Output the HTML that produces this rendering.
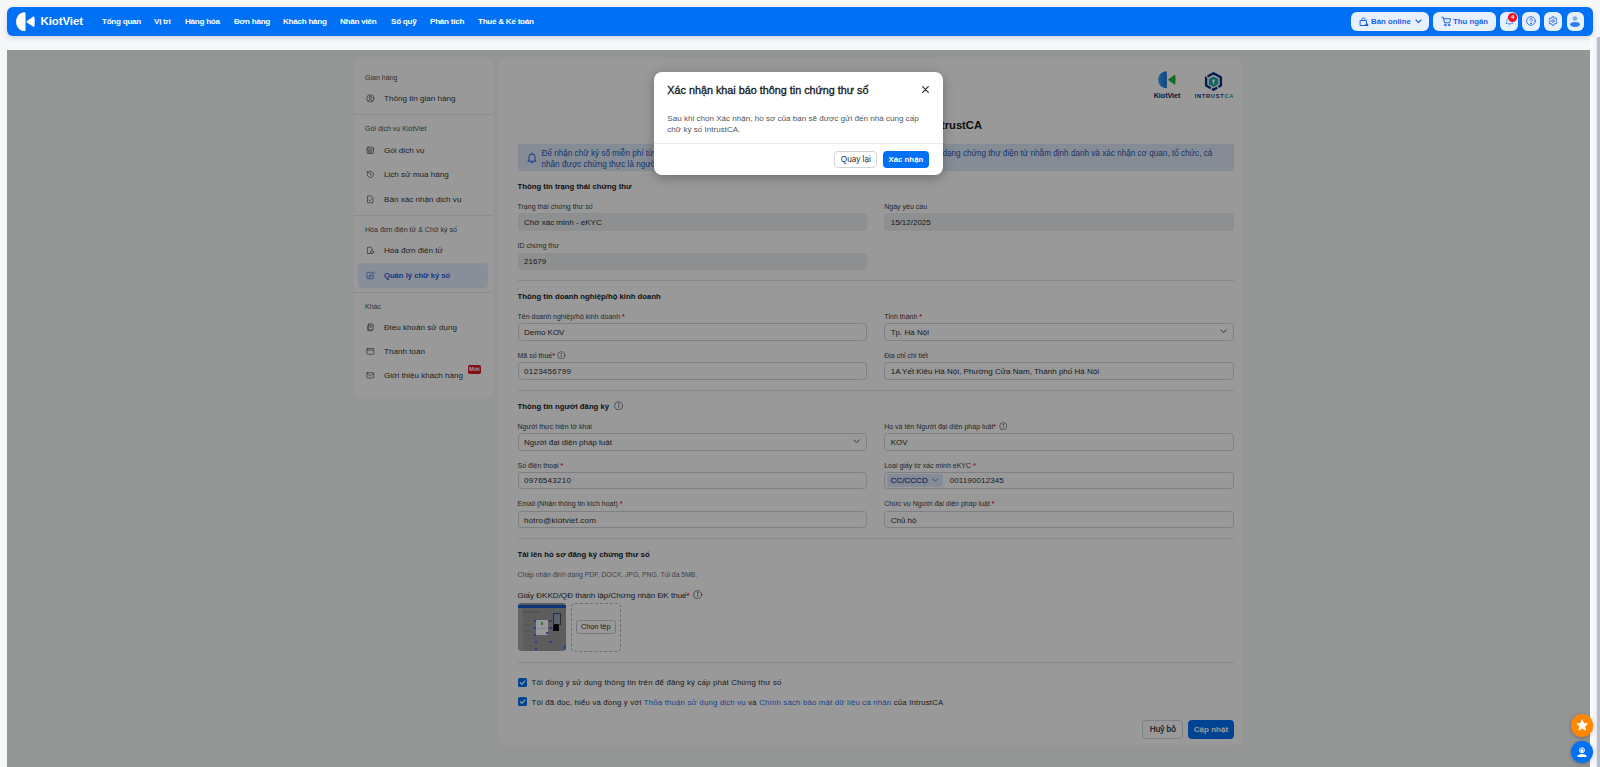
<!DOCTYPE html>
<html lang="vi">
<head>
<meta charset="utf-8">
<title>KiotViet - Quản lý chữ ký số</title>
<style>
*{box-sizing:border-box;margin:0;padding:0}
html,body{width:1600px;height:767px;overflow:hidden}
body{background:#f6f7f9;font-family:"Liberation Sans",Arial,sans-serif;color:#1f2329;position:relative;-webkit-font-smoothing:antialiased}
.abs{position:absolute}
/* ---------- header ---------- */
#hdr{position:absolute;left:7px;top:7px;width:1586px;height:29px;background:#0070f4;border-radius:6px;box-shadow:0 2px 5px rgba(60,80,120,.22)}
#hdr .brand{position:absolute;left:33.5px;top:5.2px;font-size:11.5px;font-weight:700;color:#fff;line-height:19px;letter-spacing:-.1px}
#hdr .nav{position:absolute;top:0;height:29px;line-height:29px;font-size:8.1px;letter-spacing:-.26px;font-weight:700;color:#fff;white-space:nowrap}
.hbtn{position:absolute;top:5.2px;height:18.6px;border-radius:6px;background:#e6f0ff;color:#1c62e8;font-size:7.8px;font-weight:700;line-height:19.8px;white-space:nowrap}
/* ---------- frame ---------- */
#frame{position:absolute;left:7px;top:50px;width:1583px;height:717px;background:#f7faf8;overflow:hidden}
#ovl{position:absolute;left:0;top:0;width:1583px;height:717px;background:rgba(0,0,0,.4)}
.card{position:absolute;background:#fff;border-radius:5px}
/* sidebar */
#side{left:347px;top:9px;width:138.5px;height:337.5px}
#side .grp{position:absolute;left:11px;margin-top:.8px;font-size:7.05px;color:#4b5058;line-height:10px;white-space:nowrap}
#side .it{position:absolute;left:30px;margin-top:1px;font-size:8.1px;color:#33373d;line-height:12px;white-space:nowrap}
#side .ic{position:absolute;left:12.3px;margin-top:.6px;width:8.7px;height:8.7px}
#side .hr{position:absolute;left:0;width:138px;height:1px;background:#e6e8eb}
#side .act{position:absolute;left:3.5px;top:203.5px;width:130px;height:25px;border-radius:4px;background:#e4eefd}
/* main */
#main{left:492px;top:9px;width:743px;height:686px}
.sec{position:absolute;left:18.5px;font-size:7.75px;font-weight:700;color:#16191d;line-height:12px;white-space:nowrap}
.lbl{position:absolute;margin-top:.7px;font-size:7.03px;color:#3d4148;line-height:10px;white-space:nowrap}
.lbl b{color:#e5252a;font-weight:700}
.inp{position:absolute;width:349.5px;height:17px;border:1px solid #d2d5da;border-radius:3.5px;background:#fff;font-size:8px;color:#2a2e34;line-height:15px;padding-left:5.5px;white-space:nowrap}
.inp.dis{background:#eceef1;border-color:#eceef1}
.c1{left:18px}.c2{left:385px}
.hr2{position:absolute;left:18.5px;width:716.5px;height:1px;background:#e3e5e8}
.chev{position:absolute;right:6px;top:5px;width:7px;height:5px}
.info{display:inline-block;width:8.6px;height:8.6px;vertical-align:-1.8px;margin-left:2.5px}
.tag{position:relative;display:inline-block;width:56.75px;height:13.2px;line-height:14px;padding-left:3.75px;border-radius:2.5px;background:#dfe9fb;color:#3560b5;font-weight:400;-webkit-text-stroke:.28px #3560b5;font-size:8.1px;vertical-align:0;margin-left:-4px;text-align:left}
.ck{margin-top:.9px;font-size:7.8px;letter-spacing:.19px;color:#2a2e34;line-height:12px;white-space:nowrap}
.lk{color:#2a70ee}
.btn{border-radius:3px;font-size:7.600px;font-weight:700;text-align:center;white-space:nowrap}
.alt{font-size:8.17px;color:#2858b8;line-height:10.75px;white-space:nowrap}
/* modal */
#modal{position:absolute;left:654px;top:72px;width:289px;height:103.2px;background:#fff;border-radius:8px;box-shadow:0 3px 12px rgba(0,0,0,.28)}
</style>
</head>
<body>
<div id="hdr">
  <svg class="abs" style="left:9px;top:5px" width="19" height="20" viewBox="0 0 19 20"><path d="M8.600 0.300 C3.600 0.300 0.100 4.600 0.100 9.700 C0.100 14.800 3.600 19.100 8.600 19.100 C9.300 19.100 9.500 18.700 9.500 18 L9.500 1.400 C9.500 0.700 9.300 0.300 8.600 0.300 Z" fill="#fff"/><path d="M17.300 4.600 C17.800 4.300 18.300 4.500 18.400 5.100 C18.900 8.100 18.900 11.300 18.400 14.300 C18.300 14.900 17.800 15.100 17.300 14.800 L10.900 10.400 C10.400 10 10.400 9.400 10.900 9 Z" fill="#fff"/></svg>
  <div class="brand">KiotViet</div>
  <div class="nav" style="left:95px">Tổng quan</div>
  <div class="nav" style="left:147px">Vị trí</div>
  <div class="nav" style="left:178px">Hàng hóa</div>
  <div class="nav" style="left:227px">Đơn hàng</div>
  <div class="nav" style="left:276px">Khách hàng</div>
  <div class="nav" style="left:333px">Nhân viên</div>
  <div class="nav" style="left:384px">Sổ quỹ</div>
  <div class="nav" style="left:423px">Phân tích</div>
  <div class="nav" style="left:471px">Thuế &amp; Kế toán</div>
  <div class="hbtn" style="left:1344px;width:77.5px;padding-left:20px">Bán online
    <svg class="abs" style="left:8px;top:4.5px" width="10" height="10" viewBox="0 0 20 20" fill="none" stroke="#1c62e8" stroke-width="2" stroke-linecap="round" stroke-linejoin="round"><path d="M3 7h12v10H3z"/><path d="M6 7V5a3 3 0 0 1 6 0v2"/><circle cx="15.5" cy="15.5" r="3.2" fill="#1c62e8" stroke="none"/></svg>
    <svg class="abs" style="left:64px;top:6.5px" width="7" height="5" viewBox="0 0 7 5" fill="none" stroke="#1c62e8" stroke-width="1.2" stroke-linecap="round" stroke-linejoin="round"><path d="M1 1l2.5 2.6L6 1"/></svg>
  </div>
  <div class="hbtn" style="left:1426px;width:63px;padding-left:20px">Thu ngân
    <svg class="abs" style="left:7.5px;top:4px" width="11" height="11" viewBox="0 0 22 22" fill="none" stroke="#1c62e8" stroke-width="2" stroke-linecap="round" stroke-linejoin="round"><path d="M1.5 2.5h3l2.6 11h10l2.2-8H6"/><circle cx="8.5" cy="18" r="1.6"/><circle cx="16" cy="18" r="1.6"/></svg>
  </div>
  <div class="hbtn" style="left:1493px;width:17.800px">
    <svg class="abs" style="left:4.500px;top:4.300px" width="9" height="10" viewBox="0 0 18 20" fill="none" stroke="#4f8df5" stroke-width="1.500" stroke-linecap="round" stroke-linejoin="round"><path d="M3.500 13V8.500a5.500 5.500 0 0 1 11 0V13l1.500 2h-14z"/><path d="M7.500 17.500h3"/></svg>
    <div class="abs" style="left:8.400px;top:1.100px;width:8.400px;height:8.400px;border-radius:50%;background:#f5131f;color:#fff;font-size:6px;line-height:8.400px;text-align:center;font-weight:700">4</div>
  </div>
  <div class="hbtn" style="left:1515.200px;width:17.800px">
    <svg class="abs" style="left:3.900px;top:4.300px" width="10" height="10" viewBox="0 0 20 20" fill="none" stroke="#1c62e8" stroke-width="1.700" stroke-linecap="round" stroke-linejoin="round"><circle cx="10" cy="10" r="8.600"/><path d="M7.500 7.900a2.600 2.600 0 1 1 3.900 2.200c-.9.500-1.400 1-1.400 1.900"/><circle cx="10" cy="14.700" r=".6" fill="#1c62e8"/></svg>
  </div>
  <div class="hbtn" style="left:1537.300px;width:17.800px">
    <svg class="abs" style="left:3.900px;top:4.300px" width="10" height="10" viewBox="0 0 20 20" fill="none" stroke="#1c62e8" stroke-width="1.700" stroke-linejoin="round"><circle cx="10" cy="10" r="2.600"/><path d="M8.300 1.500h3.400l.6 2.500 1.600.9 2.400-.8 1.700 3-1.800 1.700v2.400l1.800 1.700-1.700 3-2.400-.8-1.600.9-.6 2.500H8.300l-.6-2.500-1.600-.9-2.400.8-1.700-3 1.800-1.700V8.800L2 7.100l1.700-3 2.400.8 1.600-.9z"/></svg>
  </div>
  <div class="hbtn" style="left:1559.500px;width:17.800px">
    <svg class="abs" style="left:3.900px;top:4.100px" width="10" height="12" viewBox="0 0 20 24"><circle cx="10" cy="5.200" r="4.800" fill="#7fb0f5"/><ellipse cx="10" cy="17" rx="9.500" ry="4.800" fill="#2a7ff0"/></svg>
  </div>
</div>
<div id="frame">
  <div class="card" id="side">
  <div class="grp" style="top:12.8px">Gian hàng</div>
  <svg class="ic" style="top:34.5px" viewBox="0 0 18 18" fill="none" stroke="#3f434a" stroke-width="1.35" stroke-linecap="round" stroke-linejoin="round"><circle cx="9" cy="9" r="7.400"/><circle cx="9" cy="7" r="2.300"/><path d="M4.300 14.600c.9-2.200 2.600-3.200 4.700-3.200s3.800 1 4.700 3.200"/></svg><div class="it" style="top:33.0px">Thông tin gian hàng</div>
  <div class="hr" style="top:54.5px"></div>
  <div class="grp" style="top:64.4px">Gói dịch vụ KiotViet</div>
  <svg class="ic" style="top:86.5px" viewBox="0 0 18 18" fill="none" stroke="#3f434a" stroke-width="1.35" stroke-linecap="round" stroke-linejoin="round"><rect x="2.500" y="2.500" width="13" height="13" rx="1.500"/><path d="M2.500 6.500h13M6 10h6v3H6z"/></svg><div class="it" style="top:85.0px">Gói dịch vụ</div>
  <svg class="ic" style="top:110.5px" viewBox="0 0 18 18" fill="none" stroke="#3f434a" stroke-width="1.35" stroke-linecap="round" stroke-linejoin="round"><path d="M2.500 9a6.500 6.500 0 1 0 2-4.700L2.500 6.200"/><path d="M2.500 2.800v3.400h3.400M9 5.500V9l2.500 1.500"/></svg><div class="it" style="top:109.0px">Lịch sử mua hàng</div>
  <svg class="ic" style="top:135.5px" viewBox="0 0 18 18" fill="none" stroke="#3f434a" stroke-width="1.35" stroke-linecap="round" stroke-linejoin="round"><path d="M4 2h7l3.500 3.500V16H4z"/><path d="M6.500 10.500l1.800 1.800 3.200-3.600"/></svg><div class="it" style="top:134.0px">Bản xác nhận dịch vụ</div>
  <div class="hr" style="top:156px"></div>
  <div class="grp" style="top:165.3px">Hóa đơn điện tử &amp; Chữ ký số</div>
  <svg class="ic" style="top:186.9px" viewBox="0 0 18 18" fill="none" stroke="#3f434a" stroke-width="1.35" stroke-linecap="round" stroke-linejoin="round"><path d="M10.500 15.500H3v-13h7l3 3v2.500"/><circle cx="12.500" cy="12.500" r="3.200"/></svg><div class="it" style="top:185.4px">Hóa đơn điện tử</div>
  <div class="act"></div>
  <svg class="ic" style="top:211.5px" viewBox="0 0 18 18" fill="none" stroke="#1d5fe0" stroke-width="1.4" stroke-linecap="round" stroke-linejoin="round"><path d="M15 9.500v5a1.500 1.500 0 0 1-1.500 1.500h-10A1.500 1.500 0 0 1 2 14.500v-10A1.500 1.500 0 0 1 3.500 3H9"/><path d="M8 11l1-3.500 6-6 2.500 2.500-6 6z"/><path d="M4.500 12.500c1-.8 2-.8 3 0"/></svg><div class="it" style="top:210.0px;color:#1d5fe0;font-weight:700;font-size:7.65px">Quản lý chữ ký số</div>
  <div class="hr" style="top:232.500px"></div>
  <div class="grp" style="top:241.9px">Khác</div>
  <svg class="ic" style="top:263.5px" viewBox="0 0 18 18" fill="none" stroke="#3f434a" stroke-width="1.35" stroke-linecap="round" stroke-linejoin="round"><rect x="5" y="2" width="10" height="12" rx="1.500"/><path d="M5 5H3.500v9.500A1.500 1.500 0 0 0 5 16h8v-2M8 5.500h4M8 8.500h4"/></svg><div class="it" style="top:262.0px">Điều khoản sử dụng</div>
  <svg class="ic" style="top:287.9px" viewBox="0 0 18 18" fill="none" stroke="#3f434a" stroke-width="1.35" stroke-linecap="round" stroke-linejoin="round"><rect x="2" y="3" width="14" height="12" rx="1.500"/><path d="M2 6.500h14"/></svg><div class="it" style="top:286.4px">Thanh toán</div>
  <svg class="ic" style="top:311.9px" viewBox="0 0 18 18" fill="none" stroke="#3f434a" stroke-width="1.35" stroke-linecap="round" stroke-linejoin="round"><rect x="2" y="3.500" width="14" height="11" rx="1.500"/><path d="M2.500 5l6.500 5 6.500-5"/></svg><div class="it" style="top:310.4px">Giới thiệu khách hàng</div>
  <div class="abs" style="left:113.600px;top:305.900px;width:13.500px;height:9px;border-radius:1.800px;background:#e0161c;color:#fff;font-size:5.800px;font-weight:700;line-height:9.200px;text-align:center">Mới</div>
  </div>
  <div class="card" id="main">
  <svg class="abs" style="left:659px;top:11.5px" width="18" height="18" viewBox="0 0 18 18"><defs><linearGradient id="kvg" x1="0" y1="0" x2="1" y2="0"><stop offset="0" stop-color="#3ba6f0"/><stop offset="1" stop-color="#1a6fe0"/></linearGradient></defs><path d="M8.700 0.300 C3.500 0.300 0.200 4.200 0.200 8.800 C0.200 13.400 3.500 17.300 8.700 17.300 C9 12 9 6 8.700 0.300 Z" fill="url(#kvg)"/><path d="M17 3.600 L9.800 8.800 L17 14 C17.800 10.600 17.800 7 17 3.600 Z" fill="#25b23c"/></svg>
  <div class="abs" style="left:654.500px;top:32.900px;width:27px;font-size:7.3px;font-weight:700;color:#0e2a5c;line-height:8px;text-align:center;white-space:nowrap;letter-spacing:-.1px">KiotViet</div>
  <svg class="abs" style="left:705.300px;top:12.700px" width="19" height="19" viewBox="0 0 19 19"><path d="M9.500 1.300 L16.900 5.400 L16.900 13.500 L9.500 17.700 L2.100 13.500 L2.100 5.400 Z" fill="none" stroke="#0d2f86" stroke-width="2.400" stroke-linejoin="round" stroke-dasharray="19.500 1.300 6 1.300 14 1.300"/><path d="M9.500 4.400 L14.200 7 L14.200 12.300 L9.500 15 L4.800 12.300 L4.800 7 Z" fill="#17a7a2"/><circle cx="9.500" cy="8.500" r="1.350" fill="#fff"/><path d="M8.850 9h1.300v3.200H8.850z" fill="#fff"/></svg>
  <div class="abs" style="left:695.700px;top:33.700px;width:39px;font-size:5.600px;font-weight:700;color:#0d2f86;line-height:7px;white-space:nowrap;letter-spacing:.78px">INTRUST<span style="color:#15a5a0">CA</span></div>
  <div class="abs" id="h1" style="right:260px;top:59.300px;font-size:11.200px;font-weight:700;color:#15181c;line-height:14px;white-space:nowrap">Đăng ký chữ ký số miễn phí từ IntrustCA</div>
  <div class="abs" style="left:18.500px;top:85px;width:716.500px;height:26.800px;background:#dfe9f8"></div>
  <svg class="abs" style="left:27.500px;top:93.200px" width="10" height="11.500" viewBox="0 0 20 23" fill="none" stroke="#1d5fe0" stroke-width="1.900" stroke-linecap="round" stroke-linejoin="round"><path d="M4 16V10a6 6 0 0 1 12 0v6l1.800 2.400H2.200z"/><path d="M8 21.300h4"/><path d="M10 2v2"/></svg>
  <div class="abs alt" id="al1" style="left:42.500px;top:90px">Để nhận chữ ký số miễn phí từ <span id="alh">IntrustCA, bạn cần đăng ký chứng thư số. Chứng thư số là một</span></div>
  <div class="abs alt" id="al2" style="left:443.500px;top:90px">dạng chứng thư điện tử nhằm định danh và xác nhận cơ quan, tổ chức, cá</div>
  <div class="abs alt" id="al3" style="left:42.500px;top:101px">nhân được chứng thực là người ký chữ ký số.</div>
  <div class="sec" style="top:121.50px">Thông tin trạng thái chứng thư</div>
  <div class="lbl" style="left:18.5px;top:142.75px">Trạng thái chứng thư số</div>
  <div class="lbl" style="left:385.2px;top:142.75px">Ngày yêu cầu</div>
  <div class="inp dis" style="left:18.5px;top:154.25px;height:17.25px;line-height:17.05px">Chờ xác minh - eKYC</div>
  <div class="inp dis" style="left:385.2px;top:154.25px;height:17.25px;line-height:17.05px">15/12/2025</div>
  <div class="lbl" style="left:18.5px;top:181.25px">ID chứng thư</div>
  <div class="inp dis" style="left:18.5px;top:193.50px;height:17.00px;line-height:16.80px">21679</div>
  <div class="hr2" style="top:220.75px"></div>
  <div class="sec" style="top:231.50px">Thông tin doanh nghiệp/hộ kinh doanh</div>
  <div class="lbl" style="left:18.5px;top:252.00px">Tên doanh nghiệp/hộ kinh doanh <b>*</b></div>
  <div class="lbl" style="left:385.2px;top:252.00px">Tỉnh thành <b>*</b></div>
  <div class="inp " style="left:18.5px;top:264.00px;height:17.50px;line-height:17.30px">Demo KOV</div>
  <div class="inp " style="left:385.2px;top:264.00px;height:17.50px;line-height:17.30px">Tp. Hà Nội<svg class="chev" viewBox="0 0 7 5" fill="none" stroke="#4a4e55" stroke-width=".95" stroke-linecap="round" stroke-linejoin="round"><path d="M.8.900l2.700 2.800L6.200.900"/></svg></div>
  <div class="lbl" style="left:18.5px;top:291.00px">Mã số thuế<b>*</b><svg class="info" viewBox="0 0 18 18" fill="none" stroke="#4a4e55" stroke-width="1.3" stroke-linecap="round"><circle cx="9" cy="9" r="7.600"/><path d="M9 8.200v4.600"/><circle cx="9" cy="5.400" r=".5" fill="#4a4e55"/></svg></div>
  <div class="lbl" style="left:385.2px;top:291.00px">Địa chỉ chi tiết</div>
  <div class="inp " style="left:18.5px;top:303.00px;height:17.50px;line-height:17.30px"><span style="letter-spacing:.26px">0123456799</span></div>
  <div class="inp " style="left:385.2px;top:303.00px;height:17.50px;line-height:17.30px">1A Yết Kiêu Hà Nội, Phường Cửa Nam, Thành phố Hà Nội</div>
  <div class="hr2" style="top:330.50px"></div>
  <div class="sec" style="top:341.75px">Thông tin người đăng ký<svg class="info" style="width:9.500px;height:9.500px;margin-left:4.500px;vertical-align:-1.500px" viewBox="0 0 18 18" fill="none" stroke="#4a4e55" stroke-width="1.3" stroke-linecap="round"><circle cx="9" cy="9" r="7.600"/><path d="M9 8.200v4.600"/><circle cx="9" cy="5.400" r=".5" fill="#4a4e55"/></svg></div>
  <div class="lbl" style="left:18.5px;top:362.00px">Người thực hiện tờ khai</div>
  <div class="lbl" style="left:385.2px;top:362.00px">Họ và tên Người đại diện pháp luật<b>*</b><svg class="info" viewBox="0 0 18 18" fill="none" stroke="#4a4e55" stroke-width="1.3" stroke-linecap="round"><circle cx="9" cy="9" r="7.600"/><path d="M9 8.200v4.600"/><circle cx="9" cy="5.400" r=".5" fill="#4a4e55"/></svg></div>
  <div class="inp " style="left:18.5px;top:373.75px;height:17.75px;line-height:17.55px">Người đại diện pháp luật<svg class="chev" viewBox="0 0 7 5" fill="none" stroke="#4a4e55" stroke-width=".95" stroke-linecap="round" stroke-linejoin="round"><path d="M.8.900l2.700 2.800L6.200.900"/></svg></div>
  <div class="inp " style="left:385.2px;top:373.75px;height:17.75px;line-height:17.55px">KOV</div>
  <div class="lbl" style="left:18.5px;top:401.50px">Số điện thoại <b>*</b></div>
  <div class="lbl" style="left:385.2px;top:401.50px">Loại giấy tờ xác minh eKYC <b>*</b></div>
  <div class="inp " style="left:18.5px;top:413.00px;height:17.00px;line-height:16.80px"><span style="letter-spacing:.26px">0976543210</span></div>
  <div class="inp tagged" style="left:385.2px;top:413.00px;height:17.00px;line-height:16.80px"><span class="tag">CC/CCCD<svg class="abs" style="left:45.500px;top:4.200px" width="6.500" height="4.500" viewBox="0 0 7 5" fill="none" stroke="#3f74e0" stroke-width="1" stroke-linecap="round" stroke-linejoin="round"><path d="M.8.900l2.700 2.800L6.200.900"/></svg></span><span style="margin-left:6.250px;letter-spacing:.12px">001190012345</span></div>
  <div class="lbl" style="left:18.5px;top:439.50px">Email (Nhận thông tin kích hoạt) <b>*</b></div>
  <div class="lbl" style="left:385.2px;top:439.50px">Chức vụ Người đại diện pháp luật <b>*</b></div>
  <div class="inp " style="left:18.5px;top:452.00px;height:17.25px;line-height:17.05px"><span style="letter-spacing:.19px">hotro@kiotviet.com</span></div>
  <div class="inp " style="left:385.2px;top:452.00px;height:17.25px;line-height:17.05px">Chủ hộ</div>
  <div class="hr2" style="top:479.00px"></div>
  <div class="sec" style="top:490.00px">Tải lên hồ sơ đăng ký chứng thư số</div>
  <div class="lbl" style="left:18.500px;top:510.25px;color:#6b7078;font-size:6.83px">Chấp nhận định dạng PDF, DOCX, JPG, PNG. Tối đa 5MB.</div>
  <div class="abs" id="doc" style="left:18.500px;top:530.80px;font-size:8.06px;color:#2a2e34;line-height:12px;white-space:nowrap">Giấy ĐKKD/QĐ thành lập/Chứng nhận ĐK thuế<b style="color:#e5252a">*</b><svg class="info" style="width:9.500px;height:9.500px;margin-left:3.500px;vertical-align:-1.200px" viewBox="0 0 18 18" fill="none" stroke="#4a4e55" stroke-width="1.3" stroke-linecap="round"><circle cx="9" cy="9" r="7.600"/><path d="M9 8.200v4.600"/><circle cx="9" cy="5.400" r=".5" fill="#4a4e55"/></svg></div>
  <div class="abs" id="thumb" style="left:19.200px;top:544.300px;width:47.500px;height:47.900px;border-radius:4px;background:#9b9b9b;overflow:hidden">
<div class="abs" style="left:0;top:0;width:48px;height:2px;background:#8f98a8"></div>
<div class="abs" style="left:0;top:2px;width:48px;height:3px;background:#1558c8"></div>
<div class="abs" style="left:0;top:5px;width:5px;height:43px;background:#a9a9a9"></div>
<div class="abs" style="left:5px;top:8px;width:18px;height:1.500px;background:#8d8d8d"></div>
<div class="abs" style="left:6px;top:14px;width:6px;height:1px;background:#8a8f98"></div>
<div class="abs" style="left:6px;top:21px;width:7px;height:1px;background:#8a8f98"></div>
<div class="abs" style="left:6px;top:28px;width:6px;height:1px;background:#8a8f98"></div>
<div class="abs" style="left:6px;top:35px;width:6px;height:1px;background:#8a8f98"></div>
<div class="abs" style="left:6px;top:42px;width:7px;height:1px;background:#8a8f98"></div>
<div class="abs" style="left:17.600px;top:16.600px;width:12.500px;height:15px;background:#fff;border-radius:.8px"></div>
<div class="abs" style="left:22.800px;top:19px;width:1.800px;height:2.800px;background:#46c46e;border-radius:.5px"></div>
<div class="abs" style="left:19px;top:25px;width:9px;height:1px;background:#d9dbde"></div>
<div class="abs" style="left:27.800px;top:29px;width:1.800px;height:2px;background:#2f74ea"></div>
<div class="abs" style="left:35px;top:9.500px;width:7.600px;height:11.800px;background:#9aa3b4;border:1px solid #4a4a4a;border-top-color:#2f55a0"></div>
<div class="abs" style="left:35.200px;top:21px;width:5.600px;height:6.300px;background:#0c0c0c;border-radius:2.500px 2.500px 0 0"></div>
<div class="abs" style="left:16px;top:17px;width:1.600px;height:1.500px;background:#2f74ea"></div>
<div class="abs" style="left:31px;top:17px;width:2.500px;height:1.500px;background:#2f74ea"></div>
<div class="abs" style="left:31px;top:24px;width:2.500px;height:1.500px;background:#2f74ea"></div>
<div class="abs" style="left:16px;top:24px;width:1.600px;height:1.500px;background:#2f74ea"></div>
<div class="abs" style="left:16px;top:31px;width:1.600px;height:1.500px;background:#2f74ea"></div>
<div class="abs" style="left:16.500px;top:38px;width:2.500px;height:1.500px;background:#2f74ea"></div>
<div class="abs" style="left:31px;top:38px;width:2.500px;height:1.500px;background:#2f74ea"></div>
<div class="abs" style="left:16.500px;top:45px;width:2.500px;height:1.500px;background:#2f74ea"></div>
<div class="abs" style="left:45.500px;top:42px;width:2px;height:5px;background:#2f74ea"></div>
</div>
  <div class="abs" style="left:72.250px;top:544px;width:49.750px;height:48.750px;border:1px dashed #b6bac0;border-radius:4px"></div>
  <div class="abs" id="pick" style="left:76.750px;top:561.100px;width:40px;height:13.600px;border:1px solid #c6c9ce;border-radius:2.500px;background:#fff;font-size:7.23px;color:#2a2e34;line-height:11.250px;text-align:center;white-space:nowrap">Chọn tệp</div>
  <div class="hr2" style="top:602.50px"></div>
  <svg class="abs" style="left:18.500px;top:618.50px" width="9" height="9" viewBox="0 0 9 9"><rect width="9" height="9" rx="1.600" fill="#0070f4"/><path d="M2.200 4.600l1.700 1.700 3-3.300" fill="none" stroke="#fff" stroke-width="1.150" stroke-linecap="round" stroke-linejoin="round"/></svg>
  <div class="abs ck" id="ck1" style="left:32.500px;top:617.00px">Tôi đồng ý sử dụng thông tin trên để đăng ký cấp phát Chứng thư số</div>
  <svg class="abs" style="left:18.500px;top:638.40px" width="9" height="9" viewBox="0 0 9 9"><rect width="9" height="9" rx="1.600" fill="#0070f4"/><path d="M2.200 4.600l1.700 1.700 3-3.300" fill="none" stroke="#fff" stroke-width="1.150" stroke-linecap="round" stroke-linejoin="round"/></svg>
  <div class="abs ck" id="ck2" style="left:32.500px;top:637.00px">Tôi đã đọc, hiểu và đồng ý với <span class="lk">Thỏa thuận sử dụng dịch vụ</span> và <span class="lk">Chính sách bảo mật dữ liệu cá nhân</span> của IntrustCA</div>
  <div class="abs btn" id="bcancel" style="left:643.400px;top:661.300px;width:40.700px;height:18.300px;border-radius:4px;border:1px solid #d2d5da;background:#fff;color:#2a2e34;font-weight:400;-webkit-text-stroke:.22px #2a2e34;font-size:8.2px;line-height:17.900px">Huỷ bỏ</div>
  <div class="abs btn" id="bok" style="left:688.800px;top:661.300px;width:46.300px;height:18.300px;border-radius:4px;background:#0070f4;color:#fff;font-size:8px;line-height:19.800px">Cập nhật</div>
  </div>
  <div id="ovl"></div>
</div>
<div class="abs" style="left:1590px;top:37px;width:7px;height:730px;background:linear-gradient(90deg,#fbfcfd 0%,#f6f7fa 70%,#e4e7ee 100%)"></div>
<div class="abs" style="left:1597px;top:37px;width:3px;height:730px;background:#b9bdc9"></div>
<div class="abs" style="left:1570.800px;top:714.200px;width:22.400px;height:22.400px;border-radius:50%;background:#ff8800;box-shadow:0 1px 4px rgba(0,0,0,.28)"><svg class="abs" style="left:5px;top:4.600px" width="12.400" height="12.400" viewBox="0 0 24 24" fill="#fff"><path d="M12 1.800l3.100 6.600 7.100.9-5.200 5 1.300 7.200L12 18l-6.300 3.500L7 14.300l-5.200-5 7.100-.9z" stroke="#fff" stroke-width="1.500" stroke-linejoin="round"/></svg></div>
<div class="abs" style="left:1570.800px;top:740.800px;width:22.400px;height:22.400px;border-radius:50%;background:#0070f4;box-shadow:0 1px 4px rgba(0,0,0,.28)"><svg class="abs" style="left:5.200px;top:5px" width="12" height="12" viewBox="0 0 24 24" fill="#fff"><circle cx="12" cy="8.500" r="5" fill="none" stroke="#fff" stroke-width="2"/><circle cx="12" cy="9" r="3.200"/><path d="M2.500 22c0-4 4-6 9.500-6s9.500 2 9.500 6z"/></svg></div>
<div id="modal">
  <div class="abs" id="mt" style="left:13.300px;top:11px;font-size:10.8px;font-weight:400;-webkit-text-stroke:.32px #15181c;color:#15181c;line-height:14px;white-space:nowrap">Xác nhận khai báo thông tin chứng thư số</div>
  <svg class="abs" style="left:267.500px;top:14.300px" width="7" height="7" viewBox="0 0 7 7" fill="none" stroke="#2a2e34" stroke-width="1.200" stroke-linecap="round"><path d="M.7.700l5.600 5.600M6.300.700L.7 6.300"/></svg>
  <div class="abs" id="mb" style="left:13.300px;top:40.700px;width:270px;white-space:nowrap;font-size:8.07px;color:#50555c;line-height:11px">Sau khi chọn Xác nhận, hồ sơ của bạn sẽ được gửi đến nhà cung cấp<br>chữ ký số IntrustCA.</div>
  <div class="abs" style="left:0;top:70.700px;width:289px;height:1px;background:#e8eaed"></div>
  <div class="abs btn" id="mback" style="left:180.300px;top:79.300px;width:43px;height:17px;border:1px solid #d0d3d8;background:#fff;color:#2a2e34;line-height:15px;font-weight:400;font-size:8.16px;border-radius:4px">Quay lại</div>
  <div class="abs btn" id="mok" style="left:228.700px;top:79.300px;width:46.400px;height:17px;background:#0070f4;color:#fff;line-height:17px;font-size:7.85px;border-radius:4px">Xác nhận</div>
</div>
</body>
</html>
